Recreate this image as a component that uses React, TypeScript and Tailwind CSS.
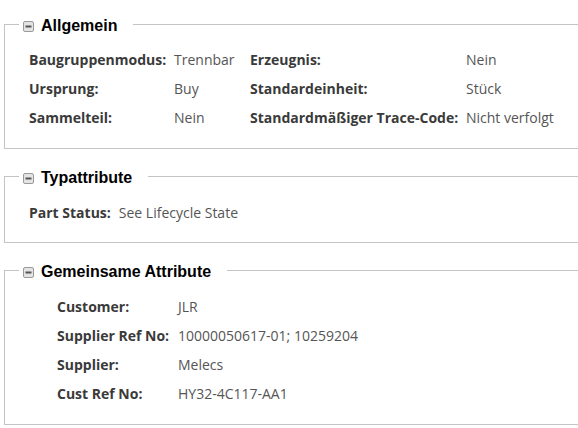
import React from 'react'

const body = { fontFamily: '"Open Sans", "Noto Sans", sans-serif' }
const head = { fontFamily: '"Liberation Sans", Arial, sans-serif' }

function CollapseIcon() {
  return (
    <svg width="11" height="11" viewBox="0 0 11 11" className="shrink-0">
      <rect x="0.5" y="0.5" width="10" height="10" rx="1.5" fill="#e4e4e4" stroke="#9a9a9a" />
      <rect x="2.5" y="4.5" width="6" height="2" fill="#555" />
    </svg>
  )
}

function Section({ title, className, children }: { title: string; className?: string; children: React.ReactNode }) {
  return (
    <fieldset className={`border-l border-t border-b border-[#c4c4c4] -mr-4 ${className ?? ''}`}>
      <legend className="ml-[14px] pl-[4px] pr-[16px]">
        <div className="flex items-center gap-[7px] translate-y-[2px]">
          <CollapseIcon />
          <span style={head} className="text-[16px] font-bold text-black leading-[20px]">{title}</span>
        </div>
      </legend>
      {children}
    </fieldset>
  )
}

function Label({ children }: { children: React.ReactNode }) {
  return <div className="font-bold text-[#3a3a3a] whitespace-nowrap">{children}</div>
}

function Value({ children }: { children: React.ReactNode }) {
  return <div className="text-[#555] whitespace-nowrap">{children}</div>
}

export default function App() {
  return (
    <div className="w-[578px] h-[428px] bg-white overflow-hidden pl-[4px] pt-[14px]" style={body}>
      <Section title="Allgemein">
        <div className="grid grid-cols-[145px_76px_216px_auto] auto-rows-[29px] items-center text-[14px] pl-[24px] pt-[11px] pb-[16px]">
          <Label>Baugruppenmodus:</Label>
          <Value>Trennbar</Value>
          <Label>Erzeugnis:</Label>
          <Value>Nein</Value>
          <Label>Ursprung:</Label>
          <Value>Buy</Value>
          <Label>Standardeinheit:</Label>
          <Value>Stück</Value>
          <Label>Sammelteil:</Label>
          <Value>Nein</Value>
          <Label>Standardmäßiger Trace-Code:</Label>
          <Value>Nicht verfolgt</Value>
        </div>
      </Section>

      <Section title="Typattribute" className="mt-[17px]">
        <div className="flex items-center gap-[8px] h-[29px] text-[14px] pl-[24px] mt-[12px] mb-[15px]">
          <Label>Part Status:</Label>
          <Value>See Lifecycle State</Value>
        </div>
      </Section>

      <Section title="Gemeinsame Attribute" className="mt-[17px]">
        <div className="grid grid-cols-[121px_auto] auto-rows-[29px] items-center text-[14px] pl-[52px] pt-[12px] pb-[16px]">
          <Label>Customer:</Label>
          <Value>JLR</Value>
          <Label>Supplier Ref No:</Label>
          <Value>10000050617-01; 10259204</Value>
          <Label>Supplier:</Label>
          <Value>Melecs</Value>
          <Label>Cust Ref No:</Label>
          <Value>HY32-4C117-AA1</Value>
        </div>
      </Section>
    </div>
  )
}
